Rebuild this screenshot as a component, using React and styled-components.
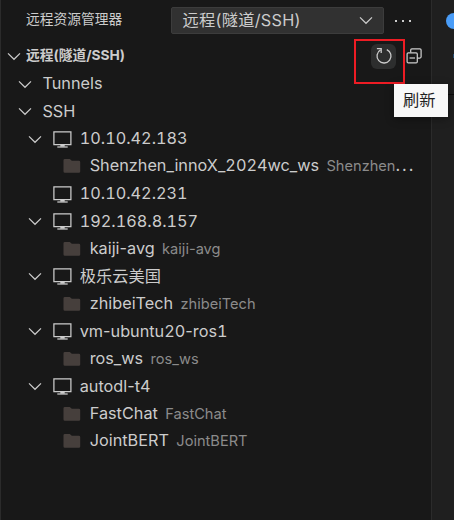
import React from "react";
import styled, { createGlobalStyle, css } from "styled-components";

const Global = createGlobalStyle`
  html, body { margin: 0; background: #181818; overflow: hidden; }
  * { box-sizing: border-box; }
`;

const Window = styled.div`
  position: relative;
  display: flex;
  width: 454px;
  height: 520px;
  overflow: hidden;
  background: #181818;
  color: #cccccc;
  font-family: Inter, "Noto Sans CJK SC", sans-serif;
  font-size: 16.25px;
`;

const Sidebar = styled.aside`
  width: 432px;
  flex: none;
  border-left: 1px solid #2b2b2b;
  border-right: 1px solid #2b2b2b;
`;

const Editor = styled.main`
  position: relative;
  flex: 1;
  background: #1f1f1f;
  overflow: hidden;
`;

const Breakpoint = styled.span`
  position: absolute;
  left: 14px;
  top: 13px;
  width: 16px;
  height: 16px;
  border-radius: 50%;
  background: #4a9df8;
`;

const Speck = styled.span`
  position: absolute;
  right: 0;
  top: 54px;
  width: 1px;
  height: 4px;
  background: #24496d;
`;

const EditorEdge = styled.span`
  position: absolute;
  left: 0;
  right: 0;
  top: 94px;
  height: 1px;
  background: #0c0c0c;
`;

const TitleBar = styled.header`
  display: flex;
  align-items: center;
  height: 42.7px;
  padding: 0 20px 2px 25px;
`;

const Title = styled.h1`
  margin: 0;
  width: 145px;
  font-size: 13.75px;
  font-weight: 400;
  line-height: 20px;
  padding-bottom: 2px;
`;

const Select = styled.div`
  display: flex;
  align-items: center;
  justify-content: space-between;
  width: 213px;
  height: 27px;
  padding: 0 7px 0 10.5px;
  border: 1px solid #3c3c3c;
  border-radius: 2px;
  background: #313131;
  line-height: 24px;
  letter-spacing: 0.25px;
`;

const Dots = styled.div`
  display: flex;
  gap: 5px;
  margin: 1px 0 0 11px;
  i { width: 2px; height: 2px; background: #cccccc; }
`;

const SectionHeader = styled.div`
  display: flex;
  align-items: center;
  height: 27.5px;
  padding: 0 5px 0 3px;
`;

const SectionTitle = styled.h2`
  margin: 0 auto 0 2px;
  font-size: 13.75px;
  font-weight: 700;
  line-height: 25px;
  padding-bottom: 2px;
`;

const Action = styled.button`
  display: grid;
  place-items: center;
  width: 25px;
  height: 25px;
  margin-left: 5px;
  padding: 0;
  border: 0;
  border-radius: 6px;
  color: #cccccc;
  background: ${(p) => (p.$hover ? "#2d2e2e" : "transparent")};
`;

const Row = styled.div`
  display: flex;
  align-items: center;
  height: 27.5px;
  padding-left: ${(p) => p.$indent}px;
  padding-right: 17px;
  white-space: nowrap;
  line-height: 27.5px;
`;

const Slot = styled.span`
  display: grid;
  place-items: center;
  flex: none;
  width: 20px;
  height: 20px;
  ${(p) => p.$gap && css`margin-right: ${p.$gap}px;`}
`;

const Label = styled.span`
  white-space: nowrap;
`;

const Digits = styled.span`
  font-variant-numeric: tabular-nums;
`;

const Detail = styled.span`
  margin-left: 7.4px;
  color: #8b8b8b;
  font-size: 14.625px;
`;

const Ellipsis = styled.span`
  letter-spacing: 1.9px;
`;

const Highlight = styled.div`
  position: absolute;
  left: 354px;
  top: 39px;
  width: 51px;
  height: 45px;
  border: 2px solid #ed1c24;
`;

const Tooltip = styled.div`
  position: absolute;
  left: 394px;
  top: 84px;
  width: 54px;
  height: 33px;
  padding-left: 9px;
  background: #f8f8f8;
  color: #1f1f1f;
  line-height: 32px;
  box-shadow: 0 2px 8px rgba(0, 0, 0, 0.36);
`;

const Chevron = () => (
  <svg width="20" height="20" viewBox="0 0 20 20" fill="none" stroke="#cccccc" strokeWidth="1.2">
    <path d="M4 7.4 10 13.3 16 7.4" />
  </svg>
);

const Monitor = () => (
  <svg width="20" height="20" viewBox="0 0 20 20" fill="none" stroke="#cccccc" strokeWidth="1.25">
    <path d="M1.9 2.8h17v12.8h-17z" />
    <path d="M5.3 18h10.4" />
    <path d="M8.3 16.8h4.4" strokeWidth="1.8" />
  </svg>
);

const Folder = () => (
  <svg width="20" height="20" viewBox="0 0 20 20">
    <path
      d="M2.8 3h5l2 1.7h7.1q1.3 0 1.3 1.3v9.4q0 1.3-1.3 1.3H2.8q-1.3 0-1.3-1.3V4.3Q1.5 3 2.8 3z"
      fill="#463f3c"
    />
  </svg>
);

const Refresh = () => (
  <svg width="20" height="20" viewBox="0 0 20 20" fill="none" stroke="#cccccc" strokeWidth="1.3">
    <path d="M12.8 3.6a7 7 0 1 1-6.2.3" />
    <path d="M2.9 2.7h4.3v4.2" />
  </svg>
);

const Collapse = () => (
  <svg width="20" height="20" viewBox="0 0 20 20" fill="none" stroke="#cccccc" strokeWidth="1.25">
    <path d="M6.7 6.500V4q0-1.200 1.200-1.200h8Q17.100 2.800 17.100 4v6.800q0 1.200-1.200 1.200h-2.600" />
    <rect x="3.100" y="6.900" width="10.200" height="10" rx="1.200" />
    <path d="M5.500 12h5.500" />
  </svg>
);

const TreeText = ({ text }) =>
  text.split(/([\d.]+)/).map((part, i) => (i % 2 ? <Digits key={i}>{part}</Digits> : part));

const hosts = [
  { name: "10.10.42.183", folders: [["Shenzhen_innoX_2024wc_ws", "Shenzhen"]], clipped: true },
  { name: "10.10.42.231", folders: [] },
  { name: "192.168.8.157", folders: [["kaiji-avg", "kaiji-avg"]] },
  { name: "极乐云美国", folders: [["zhibeiTech", "zhibeiTech"]] },
  { name: "vm-ubuntu20-ros1", folders: [["ros_ws", "ros_ws"]] },
  { name: "autodl-t4", folders: [["FastChat", "FastChat"], ["JointBERT", "JointBERT"]] },
];

export default function App() {
  return (
    <>
      <Global />
      <Window>
        <Sidebar>
          <TitleBar>
            <Title>远程资源管理器</Title>
            <Select>远程(隧道/SSH)<Chevron /></Select>
            <Dots><i /><i /><i /></Dots>
          </TitleBar>
          <SectionHeader>
            <Slot><Chevron /></Slot>
            <SectionTitle>远程(隧道/SSH)</SectionTitle>
            <Action $hover aria-label="刷新"><Refresh /></Action>
            <Action aria-label="collapse"><Collapse /></Action>
          </SectionHeader>
          {["Tunnels", "SSH"].map((name) => (
            <Row key={name} $indent={14}>
              <Slot $gap={7.4}><Chevron /></Slot>
              <Label>{name}</Label>
            </Row>
          ))}
          {hosts.map((host) => (
            <React.Fragment key={host.name}>
              <Row $indent={24}>
                <Slot $gap={7}>{host.folders.length > 0 && <Chevron />}</Slot>
                <Slot $gap={7.7}><Monitor /></Slot>
                <Label><TreeText text={host.name} /></Label>
              </Row>
              {host.folders.map(([name, detail]) => (
                <Row key={name} $indent={61}>
                  <Slot $gap={7.7}><Folder /></Slot>
                  <Label>
                    <TreeText text={name} />
                    <Detail>{detail}</Detail>
                    {host.clipped && <Ellipsis>...</Ellipsis>}
                  </Label>
                </Row>
              ))}
            </React.Fragment>
          ))}
        </Sidebar>
        <Editor>
          <Breakpoint />
          <Speck />
          <EditorEdge />
        </Editor>
        <Highlight />
        <Tooltip>刷新</Tooltip>
      </Window>
    </>
  );
}
